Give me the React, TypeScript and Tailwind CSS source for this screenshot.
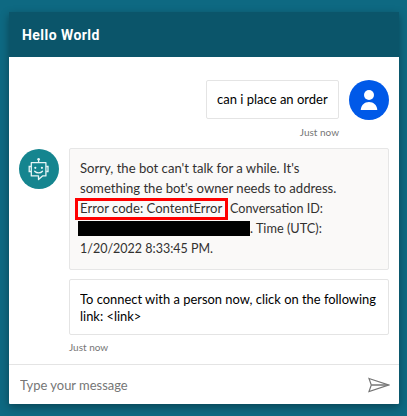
import type { ReactNode } from "react";

function Line({ className = "", children }: { className?: string; children: ReactNode }) {
  return <div className={`origin-left whitespace-nowrap ${className}`}>{children}</div>;
}

function UserAvatar() {
  return (
    <svg className="size-10 shrink-0" viewBox="0 0 40 40">
      <circle cx="20" cy="20" r="20" fill="#0059e8" />
      <circle cx="20" cy="15" r="5" fill="#fff" />
      <path d="M11.700 30c.4-4.900 3.700-8 8.300-8s8 3.100 8.300 8z" fill="#fff" />
    </svg>
  );
}

function BotAvatar() {
  return (
    <svg className="mt-px size-10 shrink-0" viewBox="0 0 40 40" fill="none" stroke="#e6f5f6" strokeWidth="1.300">
      <circle cx="20" cy="20" r="20" fill="#15858f" stroke="none" />
      <path d="M12.300 13.700h14.600v13.200h-3.400l-4 3.700v-3.700h-7.200z" strokeLinejoin="round" />
      <path d="M12 17.500h-1.800v5h1.800M27.200 17.500H29v5h-1.800M19.600 13.500v-3" />
      <path d="M15.700 22.300c2 2.200 5.800 2.200 7.800 0" strokeLinecap="round" />
      <circle cx="19.600" cy="10.300" r="1.300" fill="#e6f5f6" stroke="none" />
      <circle cx="16.300" cy="18.800" r="1.100" fill="#e6f5f6" stroke="none" />
      <circle cx="22.900" cy="18.800" r="1.100" fill="#e6f5f6" stroke="none" />
    </svg>
  );
}

export default function App() {
  return (
    <div className="h-[416px] w-[407px] bg-[#0e6982] pt-3 pl-[9px] font-['Lato','Liberation_Sans',sans-serif] text-[14px] text-black">
      <main className="flex h-[392px] w-[390px] flex-col overflow-hidden rounded-b-[1px] bg-white shadow-[0_3px_8px_rgba(0,0,0,0.35)]">
        <header className="flex h-[45px] shrink-0 items-center bg-[#0b556a] pt-px pl-[13px] font-['Roboto',sans-serif] text-[14px] font-bold tracking-[0.45px] text-white">
          <h1>Hello World</h1>
        </header>
        <section className="flex h-[307px] shrink-0 flex-col pt-[23px] pr-[10px] pl-[10px]">
          <div className="flex justify-end gap-[10px]">
            <div className="flex h-[39px] w-[133px] items-center rounded-[2px] border border-[#e4e4e4] pb-[2px] pl-[10px]">
              <Line className="scale-x-[0.93]">can i place an order</Line>
            </div>
            <UserAvatar />
          </div>
          <Line className="mt-[5px] mr-[50px] text-right text-[10px] leading-[14px] text-[#767676]">Just now</Line>
          <div className="mt-[9px] flex gap-[10px]">
            <BotAvatar />
            <div className="relative h-[122px] w-[320px] rounded-[2px] border border-[#e6e6e6] bg-[#faf9f8] pt-[9px] pl-[10px] leading-5 text-[#323130]">
              <Line className="scale-x-[0.936]">Sorry, the bot can't talk for a while. It's</Line>
              <Line className="scale-x-[0.936]">something the bot's owner needs to address.</Line>
              <Line className="flex">
                <span className="w-[149.500px] origin-left scale-x-[0.938]">Error code: ContentError</span>
                <span className="origin-left scale-x-[0.9]">Conversation ID:</span>
              </Line>
              <Line className="flex">
                <span className="mt-[3px] -ml-[2px] h-[15px] w-[172px] bg-black" />
                <span className="origin-left scale-x-[0.91]">. Time (UTC):</span>
              </Line>
              <Line className="scale-x-[0.893]">1/20/2022 8:33:45 PM.</Line>
              <div className="absolute top-[49px] left-[5px] h-[22px] w-[153px] border-3 border-[#f00]" />
            </div>
          </div>
          <div className="mt-[9px] ml-[50px] h-[56px] w-[320px] rounded-[2px] border border-[#e4e4e4] pt-[10px] pl-[10px] leading-[17px]">
            <Line className="scale-x-[0.922]">To connect with a person now, click on the following</Line>
            <Line className="scale-x-[0.922]">link: &lt;link&gt;</Line>
          </div>
          <Line className="mt-[5px] ml-[50px] text-[10px] leading-[14px] text-[#767676]">Just now</Line>
        </section>
        <footer className="flex h-10 shrink-0 items-center justify-between border-t border-[#e4e4e4] pr-[9px] pl-[11px] text-[#767676]">
          <Line className="scale-x-[0.925]">Type your message</Line>
          <svg className="h-4 w-[22px]" viewBox="0 0 22 16" fill="none" stroke="#767676" strokeWidth="1.200">
            <path d="M1 1.500L20.500 8 1 14.500 3.300 8z" />
            <path d="M3.300 8h17" strokeWidth="1.500" />
          </svg>
        </footer>
      </main>
    </div>
  );
}
